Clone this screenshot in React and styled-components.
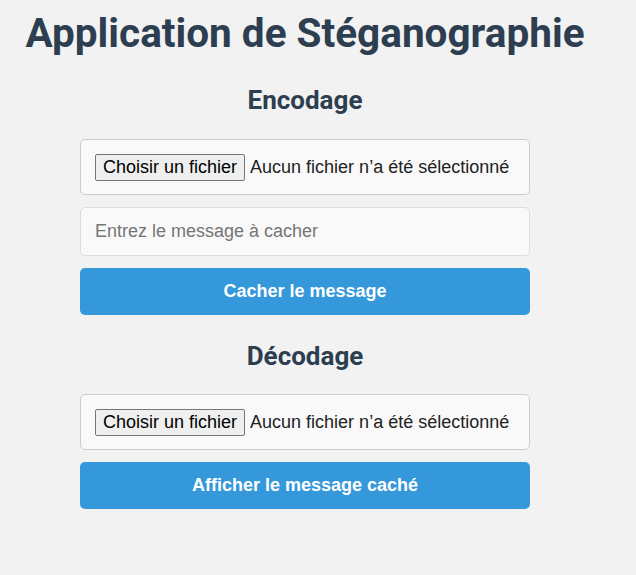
import { useState } from "react";
import styled, { createGlobalStyle } from "styled-components";

const GlobalStyle = createGlobalStyle`
  html, body {
    margin: 0;
    padding: 0;
    background: #f2f2f2;
  }
  body {
    font-family: "Liberation Sans", Arial, sans-serif;
  }
`;

const Page = styled.div`
  width: 610px;
  padding-top: 9px;
  display: flex;
  flex-direction: column;
  align-items: center;
`;

const Title = styled.h1`
  margin: 0;
  font-family: Roboto, "Liberation Sans", sans-serif;
  font-weight: 700;
  font-size: 40.5px;
  color: #2c3e50;
  white-space: nowrap;
`;

const SectionTitle = styled.h2`
  margin: ${(p) => p.$top}px 0 ${(p) => p.$bottom}px;
  font-family: Roboto, "Liberation Sans", sans-serif;
  font-weight: 700;
  font-size: 26px;
  color: #2c3e50;
`;

const Form = styled.div`
  width: 450px;
  display: flex;
  flex-direction: column;
  gap: 12px;
`;

const FileBox = styled.label`
  box-sizing: border-box;
  height: 56px;
  padding: 0 14px;
  display: flex;
  align-items: center;
  gap: 5px;
  background: #f9f9f9;
  border: 1px solid #cccccc;
  border-radius: 5px;
  font-size: 18px;
  color: #222;
  cursor: pointer;

  input {
    display: none;
  }
`;

const FakeButton = styled.span`
  box-sizing: border-box;
  height: 27px;
  padding: 0 7px;
  display: flex;
  align-items: center;
  background: #efefef;
  border: 1px solid #767676;
  border-radius: 2px;
  color: #000;
  white-space: nowrap;
`;

const FileName = styled.span`
  white-space: nowrap;
  overflow: hidden;
  text-overflow: ellipsis;
`;

const TextInput = styled.input`
  box-sizing: border-box;
  height: 49px;
  padding: 0 14px;
  background: #f9f9f9;
  border: 1px solid #dddddd;
  border-radius: 5px;
  font-family: "Liberation Sans", Arial, sans-serif;
  font-size: 18px;
  color: #222;
  outline: none;

  &::placeholder {
    color: #757575;
  }
`;

const ActionButton = styled.button`
  height: 47px;
  border: none;
  border-radius: 5px;
  background: #3498db;
  color: #fff;
  font-family: "Liberation Sans", Arial, sans-serif;
  font-weight: 700;
  font-size: 18px;
  cursor: pointer;

  &:hover {
    background: #2c89c8;
  }
`;

const FilePicker = () => {
  const [name, setName] = useState("");
  return (
    <FileBox>
      <input
        type="file"
        accept="image/*"
        onChange={(e) => setName(e.target.files[0]?.name || "")}
      />
      <FakeButton>Choisir un fichier</FakeButton>
      <FileName>{name || "Aucun fichier n’a été sélectionné"}</FileName>
    </FileBox>
  );
};

const App = () => {
  const [message, setMessage] = useState("");

  return (
    <>
      <GlobalStyle />
      <Page>
        <Title>Application de Stéganographie</Title>

        <SectionTitle $top={28} $bottom={24}>Encodage</SectionTitle>
        <Form>
          <FilePicker />
          <TextInput
            type="text"
            placeholder="Entrez le message à cacher"
            value={message}
            onChange={(e) => setMessage(e.target.value)}
          />
          <ActionButton>Cacher le message</ActionButton>
        </Form>

        <SectionTitle $top={26} $bottom={23}>Décodage</SectionTitle>
        <Form>
          <FilePicker />
          <ActionButton>Afficher le message caché</ActionButton>
        </Form>
      </Page>
    </>
  );
};

export default App;
